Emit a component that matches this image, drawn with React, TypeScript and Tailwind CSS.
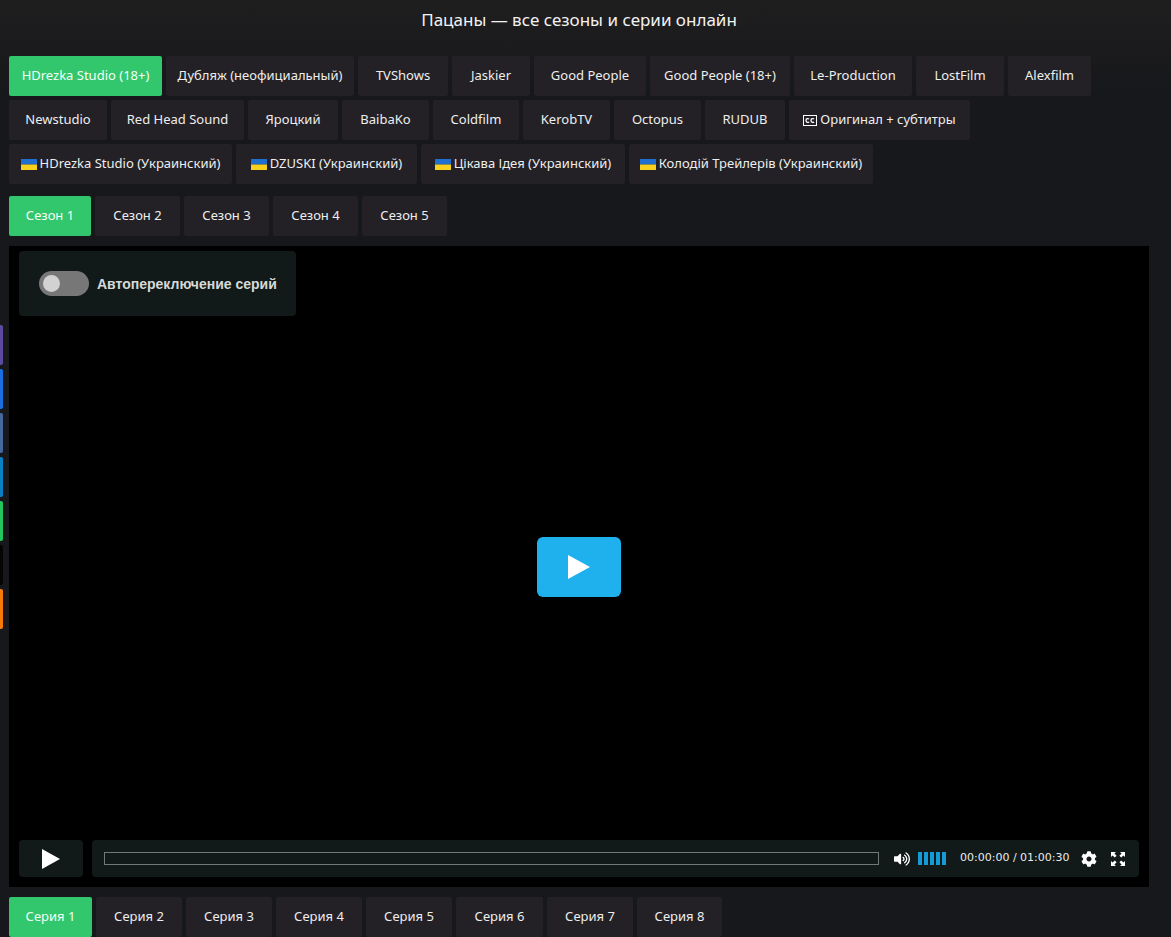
import React from 'react';
import { FaCog, FaVolumeUp } from 'react-icons/fa';

interface Tab {
  label: string;
  width: string;
  icon?: 'ua' | 'cc';
  active?: boolean;
}

const translators: Tab[][] = [
  [
    { label: 'HDrezka Studio (18+)', width: 'w-[153px]', active: true },
    { label: 'Дубляж (неофициальный)', width: 'w-[188px]' },
    { label: 'TVShows', width: 'w-[90px]' },
    { label: 'Jaskier', width: 'w-[78px]' },
    { label: 'Good People', width: 'w-[112px]' },
    { label: 'Good People (18+)', width: 'w-[140px]' },
    { label: 'Le-Production', width: 'w-[118px]' },
    { label: 'LostFilm', width: 'w-[88px]' },
    { label: 'Alexfilm', width: 'w-[83px]' },
  ],
  [
    { label: 'Newstudio', width: 'w-[98px]' },
    { label: 'Red Head Sound', width: 'w-[133px]' },
    { label: 'Яроцкий', width: 'w-[90px]' },
    { label: 'BaibaKo', width: 'w-[87px]' },
    { label: 'Coldfilm', width: 'w-[86px]' },
    { label: 'KerobTV', width: 'w-[87px]' },
    { label: 'Octopus', width: 'w-[87px]' },
    { label: 'RUDUB', width: 'w-[80px]' },
    { label: 'Оригинал + субтитры', width: 'w-[181px]', icon: 'cc' },
  ],
  [
    { label: 'HDrezka Studio (Украинский)', width: 'w-[223px]', icon: 'ua' },
    { label: 'DZUSKI (Украинский)', width: 'w-[181px]', icon: 'ua' },
    { label: 'Цікава Ідея (Украинский)', width: 'w-[204px]', icon: 'ua' },
    { label: 'Колодій Трейлерів (Украинский)', width: 'w-[244px]', icon: 'ua' },
  ],
];

const seasons: Tab[] = [
  { label: 'Сезон 1', width: 'w-[82px]', active: true },
  { label: 'Сезон 2', width: 'w-[85px]' },
  { label: 'Сезон 3', width: 'w-[85px]' },
  { label: 'Сезон 4', width: 'w-[85px]' },
  { label: 'Сезон 5', width: 'w-[85px]' },
];

const episodes: Tab[] = [
  { label: 'Серия 1', width: 'w-[83px]', active: true },
  { label: 'Серия 2', width: 'w-[86px]' },
  { label: 'Серия 3', width: 'w-[86px]' },
  { label: 'Серия 4', width: 'w-[86px]' },
  { label: 'Серия 5', width: 'w-[86px]' },
  { label: 'Серия 6', width: 'w-[87px]' },
  { label: 'Серия 7', width: 'w-[86px]' },
  { label: 'Серия 8', width: 'w-[85px]' },
];

const sideTabs = ['bg-[#5b4a9e]', 'bg-[#1a6fe0]', 'bg-[#46689f]', 'bg-[#0b7fc4]', 'bg-[#22c55e]', 'bg-[#050505]', 'bg-[#f47a0c]'];

const UaFlag = () => (
  <svg width="16" height="11" viewBox="0 0 16 11" className="shrink-0">
    <rect width="16" height="5.5" fill="#1e6fd0" />
    <rect y="5.5" width="16" height="5.5" fill="#f7d11e" />
  </svg>
);

const CcIcon = () => (
  <svg width="14" height="11" viewBox="0 0 14 11" className="shrink-0">
    <rect x="0.5" y="0.5" width="13" height="10" fill="#232126" stroke="#fff" />
    <path d="M6 4.2C5.2 3.2 3 3.4 3 5.5S5.2 7.8 6 6.8M11 4.2C10.2 3.2 8 3.4 8 5.5S10.2 7.8 11 6.8" fill="none" stroke="#fff" strokeWidth="1.3" />
  </svg>
);

const FullscreenIcon = () => (
  <svg width="16" height="16" viewBox="0 0 16 16" fill="#fff">
    <path d="M1 1h5L4.4 2.6 6.6 4.8 4.8 6.6 2.6 4.4 1 6zM15 1v5l-1.6-1.6-2.2 2.2-1.8-1.8 2.2-2.2L10 1zM1 15v-5l1.6 1.6 2.2-2.2 1.8 1.8-2.2 2.2L6 15zM15 15h-5l1.6-1.6-2.2-2.2 1.8-1.8 2.2 2.2L15 10z" />
  </svg>
);

const TabButton = ({ tab }: { tab: Tab }) => (
  <div
    className={`${tab.width} h-10 shrink-0 flex items-center justify-center gap-[3px] rounded-[2px] text-[13px] whitespace-nowrap ${
      tab.active ? 'bg-[#32c66d] text-[#f3fff7]' : 'bg-[#232126] text-[#eeeeee]'
    }`}
  >
    {tab.icon === 'ua' && <UaFlag />}
    {tab.icon === 'cc' && <CcIcon />}
    <span>{tab.label}</span>
  </div>
);

const App = () => {
  return (
    <div className="relative h-screen overflow-hidden bg-[#17181b] pl-[9px] pr-[22px] font-['Noto_Sans',sans-serif]">
      <div className="absolute inset-x-0 top-0 h-[90px] bg-gradient-to-b from-[#1f1e1f] to-transparent" />

      <div className="absolute left-0 top-[325px] flex flex-col gap-1">
        {sideTabs.map(color => (
          <div key={color} className={`${color} h-10 w-[3px] rounded-r-[2px]`} />
        ))}
      </div>

      <h1 className="relative h-14 pt-[7px] text-center text-[17px] font-normal leading-[26px] text-[#f2f2f2]">
        Пацаны — все сезоны и серии онлайн
      </h1>

      <div className="relative flex flex-col gap-1">
        {translators.map((row, i) => (
          <div key={i} className="flex gap-1">
            {row.map(tab => (
              <TabButton key={tab.label} tab={tab} />
            ))}
          </div>
        ))}
      </div>

      <div className="relative mt-3 flex gap-1">
        {seasons.map(tab => (
          <TabButton key={tab.label} tab={tab} />
        ))}
      </div>

      <div className="relative mt-[10px] flex h-[641px] flex-col justify-between bg-black px-[10px] pt-[5px] pb-[10px]">
        <div className="flex h-[65px] w-[277px] items-center gap-2 rounded-[4px] bg-[#121919] pl-5">
          <div className="flex h-[25px] w-[50px] items-center rounded-full bg-[#777777] pl-1">
            <div className="h-[17px] w-[17px] rounded-full bg-[#d2d2d2]" />
          </div>
          <span className="font-['Liberation_Sans',sans-serif] text-sm font-bold text-[#d5d9d8]">Автопереключение серий</span>
        </div>

        <div className="absolute left-[528px] top-[291px] flex h-[60px] w-[84px] items-center justify-center rounded-[6px] bg-[#1fb0ee]">
          <svg width="22" height="24" viewBox="0 0 22 24" fill="#fff">
            <path d="M0 0L22 12L0 24Z" />
          </svg>
        </div>

        <div className="flex h-[37px] gap-[9px]">
          <div className="flex w-16 items-center justify-center rounded-[4px] bg-[#121919]">
            <svg width="18" height="20" viewBox="0 0 18 20" fill="#fff">
              <path d="M0 0L18 10L0 20Z" />
            </svg>
          </div>
          <div className="flex flex-1 items-center rounded-[4px] bg-[#121919] pl-3">
            <div className="h-[13px] w-[775px] border border-[#6f7a76]" />
            <FaVolumeUp className="ml-[15px] h-4 w-4 text-white" />
            <div className="ml-2 flex gap-[2px]">
              {[0, 1, 2, 3, 4].map(n => (
                <div key={n} className="h-[13px] w-[4px] bg-[#159ad8]" />
              ))}
            </div>
            <span className="ml-[14px] w-[108px] whitespace-nowrap font-['DejaVu_Sans',sans-serif] text-[11px] text-[#e8ecea]">
              00:00:00 / 01:00:30
            </span>
            <FaCog className="ml-[13px] h-4 w-4 text-white" />
            <div className="ml-[13px]">
              <FullscreenIcon />
            </div>
          </div>
        </div>
      </div>

      <div className="relative mt-[10px] flex gap-1">
        {episodes.map(tab => (
          <TabButton key={tab.label} tab={tab} />
        ))}
      </div>
    </div>
  );
};

export default App;
